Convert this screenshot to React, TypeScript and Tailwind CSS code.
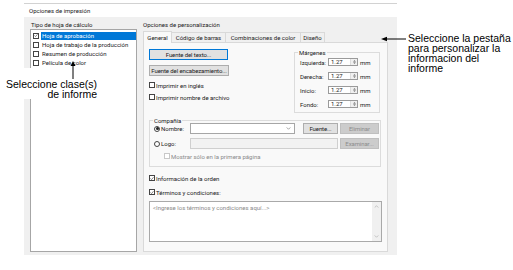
import type { ReactNode } from "react";

const ui = "font-['Roboto','Noto_Sans',sans-serif] text-[6px] leading-[7px] text-[#1a1a1a]";
const note = "font-['Liberation_Sans',Arial,sans-serif] text-[10.5px] text-black";

function Box({ checked, disabled }: { checked?: boolean; disabled?: boolean }) {
  return (
    <span
      className={`flex h-[6px] w-[6px] shrink-0 items-center justify-center border bg-white ${
        disabled ? "border-[#c8c8c8]" : "border-[#444444]"
      }`}
    >
      {checked && (
        <svg viewBox="0 0 6 6" className="h-[5px] w-[5px]">
          <path d="M0.7 3 L2.3 4.6 L5.3 1.1" fill="none" stroke="#222" strokeWidth="0.8" />
        </svg>
      )}
    </span>
  );
}

function Radio({ checked }: { checked?: boolean }) {
  return (
    <span className="flex h-[6px] w-[6px] shrink-0 items-center justify-center rounded-full border border-[#444444] bg-white">
      {checked && <span className="h-[3px] w-[3px] rounded-full bg-[#222]" />}
    </span>
  );
}

function Btn({ children, w, focus, disabled }: { children: ReactNode; w: string; focus?: boolean; disabled?: boolean }) {
  const look = disabled
    ? "border-[#bfbfbf] bg-[#cccccc] text-[#8c8c8c]"
    : focus
    ? "border-[#0078d7] bg-[#e1e1e1]"
    : "border-[#adadad] bg-[#e1e1e1]";
  return (
    <div className={`flex h-[11px] shrink-0 items-center justify-center whitespace-nowrap border tracking-[-0.1px] ${w} ${look}`}>
      {children}
    </div>
  );
}

function Spin({ label }: { label: string }) {
  return (
    <div className="flex h-[8px] items-center">
      <span className="w-[28px]">{label}</span>
      <div className="flex h-[8px] w-[30px] border border-[#9a9a9a] bg-white">
        <span className="flex flex-1 items-center pl-[2px] leading-[6px]">1.27</span>
        <span className="flex w-[7px] items-center justify-center border-l border-[#dcdcdc] bg-[#f0f0f0]">
          <svg viewBox="0 0 6 6" className="h-[6px] w-[5px]">
            <path d="M1.3 2.4 L3 0.9 L4.7 2.4 Z M1.3 3.6 L3 5.1 L4.7 3.6 Z" fill="#555" />
          </svg>
        </span>
      </div>
      <span className="ml-[2px]">mm</span>
    </div>
  );
}

function Group({ label, className, children }: { label: string; className: string; children: ReactNode }) {
  return (
    <div className={`relative border border-[#dcdcdc] ${className}`}>
      <span className="absolute -top-[4px] left-[3px] bg-[#f9f9f9] px-[1px] leading-[7px]">{label}</span>
      {children}
    </div>
  );
}

const sheets = ["Hoja de aprobación", "Hoja de trabajo de la producción", "Resumen de producción", "Película de color"];

export default function App() {
  return (
    <div className={`relative h-[270px] w-[513px] overflow-hidden bg-white ${ui}`}>
      <div className="ml-[24px] pt-[3px]">
        <div className="w-[373px] border-t border-[#d2d2d2]">
          <div className="flex h-[13px] items-center bg-white pl-[5px]">Opciones de impresión</div>
          <div className="flex h-[238px] gap-[6px] bg-[#f0f0f0] pl-[6px] pt-[3px]">
            {/* tipo de hoja */}
            <div className="flex w-[107px] flex-col">
              <div className="flex h-[9px] items-center pl-[1px]">Tipo de hoja de cálculo</div>
              <div className="h-[223px] border border-[#a6a6a6] bg-white pt-[1px]">
                {sheets.map((t, i) => (
                  <div key={t} className="flex h-[9px] items-center pl-[2px]">
                    <Box checked={i === 0} />
                    <span
                      className={`ml-[2px] flex h-[8px] flex-1 items-center pl-[1px] ${
                        i === 0 ? "bg-[#0078d7] text-white" : ""
                      }`}
                    >
                      {t}
                    </span>
                  </div>
                ))}
              </div>
            </div>

            {/* personalizacion */}
            <div className="flex w-[245px] flex-col">
              <div className="flex h-[9px] items-center">Opciones de personalización</div>
              <div className="flex h-[13px] items-end">
                <div className="relative z-10 -mb-px flex h-[12px] w-[29px] items-center justify-center border border-b-0 border-[#d9d9d9] bg-[#f9f9f9]">
                  General
                </div>
                <div className="flex h-[10px] w-[54px] items-center justify-center border border-b-0 border-l-0 border-[#d9d9d9]">
                  Código de barras
                </div>
                <div className="flex h-[10px] w-[75px] items-center justify-center border border-b-0 border-l-0 border-[#d9d9d9]">
                  Combinaciones de color
                </div>
                <div className="flex h-[10px] w-[24px] items-center justify-center border border-b-0 border-l-0 border-[#d9d9d9]">
                  Diseño
                </div>
              </div>

              <div className="flex h-[210px] flex-col border border-[#d9d9d9] bg-[#f9f9f9] px-[5px]">
                <div className="flex h-[70px] items-start">
                  <div className="flex w-[110px] flex-col pt-[6px]">
                    <Btn w="w-[79px]" focus>
                      Fuente del texto...
                    </Btn>
                    <div className="mt-[5px]">
                      <Btn w="w-[80px]">Fuente del encabezamiento...</Btn>
                    </div>
                    <div className="mt-[5px] flex h-[8px] items-center gap-[1px]">
                      <Box />
                      <span>Imprimir en inglés</span>
                    </div>
                    <div className="mt-[4px] flex h-[8px] items-center gap-[1px]">
                      <Box />
                      <span>Imprimir nombre de archivo</span>
                    </div>
                  </div>
                  <Group label="Márgenes" className="ml-auto mr-[2px] mt-[9px] flex h-[61px] w-[86px] flex-col gap-[6px] pl-[5px] pt-[5px]">
                    <Spin label="Izquierda:" />
                    <Spin label="Derecha:" />
                    <Spin label="Inicio:" />
                    <Spin label="Fondo:" />
                  </Group>
                </div>

                <Group label="Compañía" className="mr-[1px] mt-[7px] flex h-[47px] flex-col pl-[4px] pt-[2px]">
                  <div className="flex h-[11px] items-center">
                    <div className="flex w-[36px] items-center gap-[1px]">
                      <Radio checked />
                      <span>Nombre:</span>
                    </div>
                    <div className="flex h-[11px] w-[105px] items-center justify-end border border-[#a6a6a6] bg-white pr-[3px]">
                      <svg viewBox="0 0 6 4" className="h-[3px] w-[5px]">
                        <path d="M0.6 0.6 L3 3 L5.4 0.6" fill="none" stroke="#555" strokeWidth="0.7" />
                      </svg>
                    </div>
                    <div className="ml-[8px]">
                      <Btn w="w-[35px]">Fuente...</Btn>
                    </div>
                    <div className="ml-[2px]">
                      <Btn w="w-[39px]" disabled>
                        Eliminar
                      </Btn>
                    </div>
                  </div>
                  <div className="mt-[4px] flex h-[11px] items-center">
                    <div className="flex w-[36px] items-center gap-[1px]">
                      <Radio />
                      <span>Logo:</span>
                    </div>
                    <div className="h-[11px] w-[148px] border border-[#cfcfcf] bg-[#f2f2f2]" />
                    <div className="ml-[2px]">
                      <Btn w="w-[39px]" disabled>
                        Examinar...
                      </Btn>
                    </div>
                  </div>
                  <div className="mt-[3px] flex h-[8px] items-center gap-[1px] pl-[10px] text-[#8a8a8a]">
                    <Box disabled />
                    <span>Mostrar sólo en la primera página</span>
                  </div>
                </Group>

                <div className="mt-[7px] flex h-[8px] items-center gap-[1px]">
                  <Box checked />
                  <span>Información de la orden</span>
                </div>
                <div className="mt-[6px] flex h-[8px] items-center gap-[1px]">
                  <Box checked />
                  <span>Términos y condiciones:</span>
                </div>
                <div className="mt-[5px] flex h-[41px] border border-[#a9a9a9] bg-white">
                  <div className="flex-1 pl-[3px] pt-[2px] text-[#8a8a8a]">{"<Ingrese los términos y condiciones aquí...>"}</div>
                  <div className="flex w-[9px] flex-col items-center justify-between bg-[#f0f0f0] py-[3px]">
                    <svg viewBox="0 0 6 4" className="h-[3px] w-[5px]">
                      <path d="M0.6 3.4 L3 1 L5.4 3.4" fill="none" stroke="#9a9a9a" strokeWidth="0.7" />
                    </svg>
                    <svg viewBox="0 0 6 4" className="h-[3px] w-[5px]">
                      <path d="M0.6 0.6 L3 3 L5.4 0.6" fill="none" stroke="#9a9a9a" strokeWidth="0.7" />
                    </svg>
                  </div>
                </div>
              </div>
            </div>
          </div>
        </div>
      </div>

      {/* left annotation */}
      <div className={`absolute left-0 top-[68px] w-[100px] bg-white pr-[3px] pt-[11px] text-right leading-[10px] ${note}`}>
        <div>Seleccione clase(s)</div>
        <div>de informe</div>
      </div>
      <svg className="absolute left-[70px] top-[60px]" width="6" height="19" viewBox="0 0 6 19">
        <path d="M3 1 L5.5 6 L0.5 6 Z" fill="#000" />
        <path d="M3 5 L3 19" stroke="#000" strokeWidth="1" />
      </svg>

      {/* right annotation */}
      <div className="absolute left-[380px] top-[34px] flex items-start">
        <svg width="26" height="10" viewBox="0 0 26 10">
          <path d="M1 5 L7 2.7 L7 7.3 Z" fill="#000" />
          <path d="M6 5 L26 5" stroke="#000" strokeWidth="1" />
        </svg>
        <div className={`ml-[2px] -mt-[1px] leading-[10px] ${note}`}>
          <div>Seleccione la pestaña</div>
          <div>para personalizar la</div>
          <div>informacion del</div>
          <div>informe</div>
        </div>
      </div>
    </div>
  );
}
